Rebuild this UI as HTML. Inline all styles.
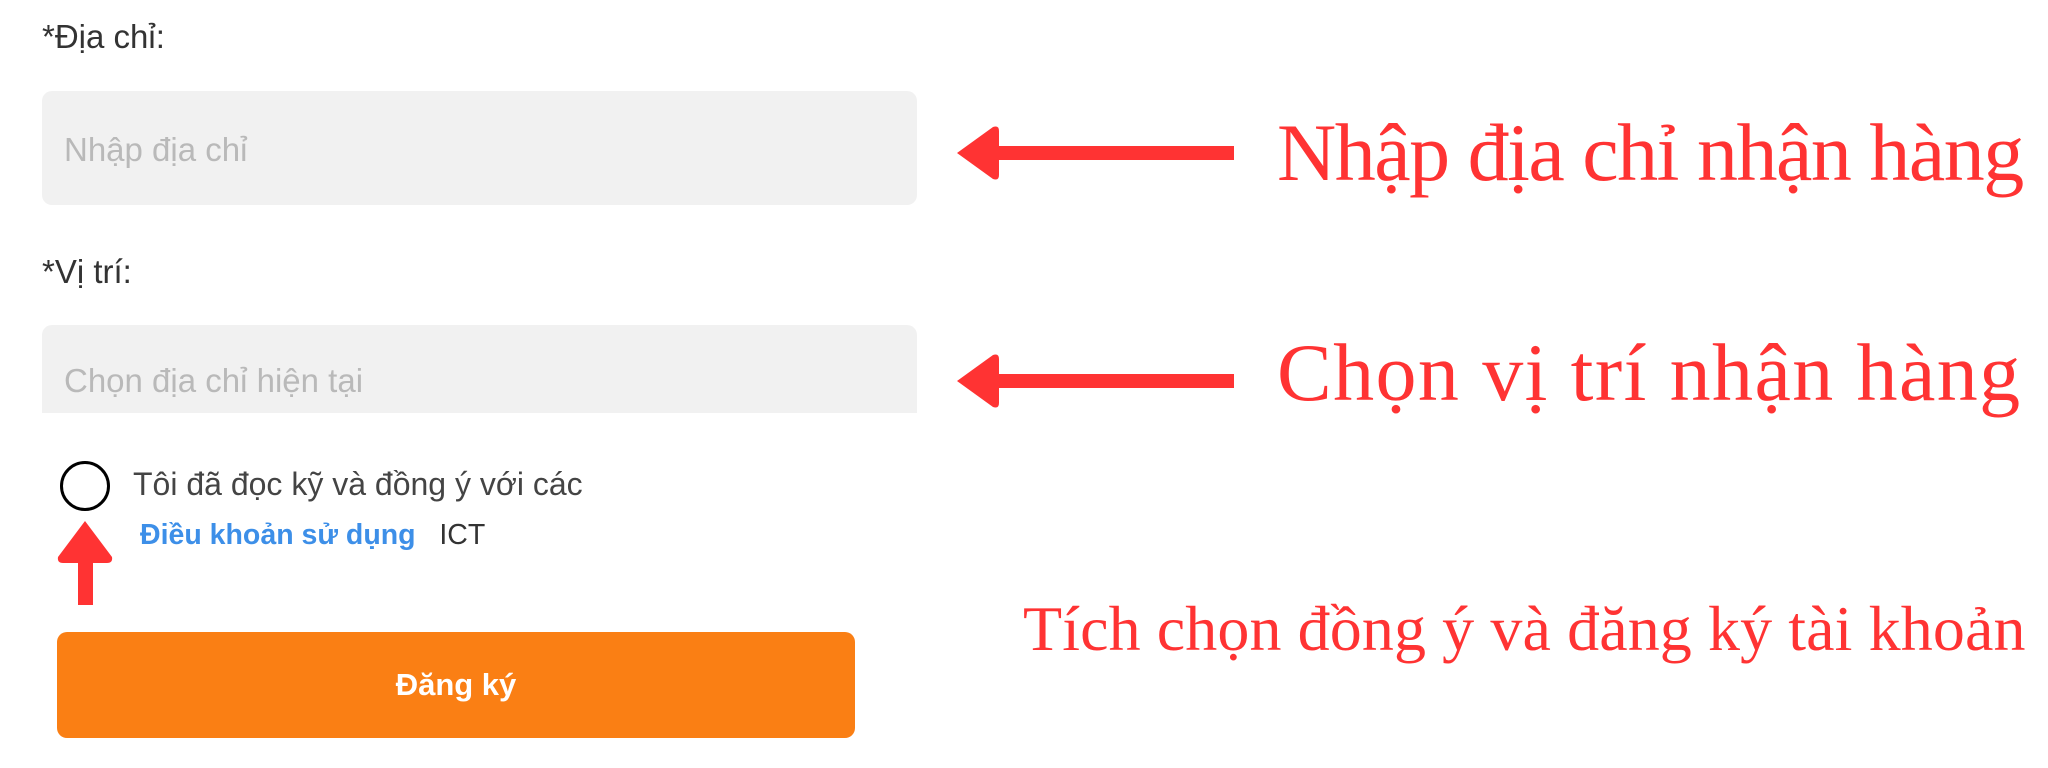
<!DOCTYPE html>
<html><head><meta charset="utf-8"><style>
html,body{margin:0;padding:0;background:#fff;width:2048px;height:768px;overflow:hidden;position:relative;font-family:"Liberation Sans",Arial,sans-serif}
.a{position:absolute;white-space:nowrap}
.lbl{font-size:33px;color:#333;line-height:1}
.inp{position:absolute;left:42px;width:875px;background:#f1f1f1;border-radius:10px}
.ph{font-size:33px;color:#b9b9b9;line-height:1}
.red{font-family:"Liberation Serif","DejaVu Serif",serif;color:#ff3333;line-height:1}
</style></head><body>
<div class="a lbl" style="left:42px;top:20px">*Địa chỉ:</div>
<div class="inp" style="top:91px;height:114px"></div>
<div class="a ph" style="left:64px;top:133px">Nhập địa chỉ</div>
<div class="a lbl" style="left:42px;top:255px">*Vị trí:</div>
<div class="inp" style="top:325px;height:88px;border-radius:10px 10px 0 0"></div>
<div class="a ph" style="left:64px;top:364px">Chọn địa chỉ hiện tại</div>

<div class="a" style="left:60px;top:461px;width:44px;height:44px;border:3px solid #000;border-radius:50%"></div>
<div class="a" style="left:133px;top:468px;font-size:32px;color:#444;line-height:1">Tôi đã đọc kỹ và đồng ý với các</div>
<div class="a" style="left:140px;top:521px;font-size:28.5px;line-height:1"><span style="color:#3d8fe8;font-weight:bold">Điều khoản sử dụng</span>&nbsp;&nbsp;&nbsp;<span style="color:#333">ICT</span></div>

<svg class="a" style="left:0;top:0" width="2048" height="768">
<g fill="#ff3333">
<rect x="78" y="555" width="15" height="50"/>
<path d="M85 521 L112 557 Q113 563 107 563 L63 563 Q57 563 58 557 Z"/>
<rect x="990" y="146" width="244" height="14"/>
<path d="M957 153 L993 127 Q999 125 999 131 L999 175 Q999 181 993 179 Z"/>
<rect x="990" y="374" width="244" height="14"/>
<path d="M957 381 L993 355 Q999 353 999 359 L999 403 Q999 409 993 407 Z"/>
</g>
</svg>

<div class="a" style="left:57px;top:632px;width:798px;height:106px;background:#fa7f14;border-radius:10px;color:#fff;font-weight:bold;font-size:31px;line-height:106px;text-align:center">Đăng ký</div>

<div class="a red" style="left:1277px;top:112px;font-size:82px;letter-spacing:-1.5px">Nhập địa chỉ nhận hàng</div>
<div class="a red" style="left:1277px;top:332px;font-size:82px;letter-spacing:1.4px">Chọn vị trí nhận hàng</div>
<div class="a red" style="left:1023px;top:597px;font-size:64px;letter-spacing:0.1px">Tích chọn đồng ý và đăng ký tài khoản</div>
</body></html>
